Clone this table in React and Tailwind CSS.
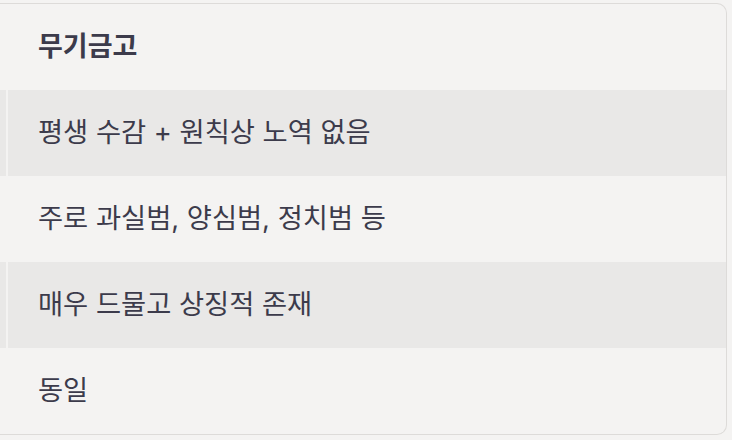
export default function App() {
  const rows = [
    { t: "평생 수감 + 원칙상 노역 없음", s: true },
    { t: "주로 과실범, 양심범, 정치범 등", s: false },
    { t: "매우 드물고 상징적 존재", s: true },
    { t: "동일", s: false },
  ];
  return (
    <div className="w-[732px] h-[440px] bg-[#f4f3f2] pt-[3px] overflow-hidden" style={{ fontFamily: 'Inter, "Noto Sans CJK KR", sans-serif' }}>
      <div className="w-[727px] border-y border-r border-[#dddbd9] rounded-r-[10px] overflow-hidden text-[#3c3b4b]">
        <div className="flex h-[86px]">
          <div className="w-[6px]" />
          <div className="w-[2px]" />
          <div className="flex-1 flex items-center pl-[30px] text-[27px] font-bold">무기금고</div>
        </div>
        {rows.map((r, i) => (
          <div key={i} className="flex h-[86px]">
            <div className={"w-[6px] " + (r.s ? "bg-[#e9e8e7]" : "")} />
            <div className="w-[2px]" />
            <div className={"flex-1 flex items-center pl-[30px] text-[27.3px] " + (r.s ? "bg-[#e9e8e7]" : "")}>{r.t}</div>
          </div>
        ))}
      </div>
    </div>
  );
}
